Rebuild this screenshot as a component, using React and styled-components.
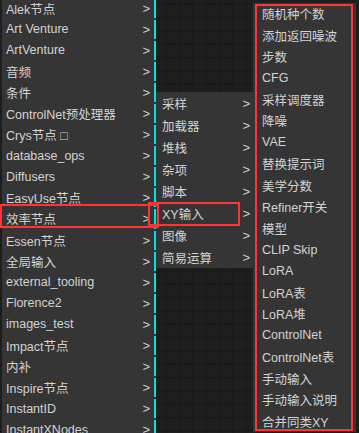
import React from 'react';
import styled, { createGlobalStyle } from 'styled-components';

const Global = createGlobalStyle`
  html, body { margin: 0; padding: 0; }
  body {
    width: 359px;
    height: 433px;
    overflow: hidden;
    background: #1d1d1d;
    font-family: "Liberation Sans", "Noto Sans CJK SC", sans-serif;
  }
`;

const Canvas = styled.div`
  position: relative;
  width: 359px;
  height: 433px;
  overflow: hidden;
  background-color: #1e1e1e;
  background-image:
    linear-gradient(#161616 1px, transparent 1px),
    linear-gradient(90deg, #161616 1px, transparent 1px);
  background-size: 13.33px 13.33px;
  background-position: 6px 4px;
`;

const Menu = styled.div`
  position: absolute;
  left: ${p => p.$x}px;
  top: ${p => p.$y}px;
  width: ${p => p.$w}px;
  display: flex;
  flex-direction: column;
  background: #353535;
  z-index: ${p => p.$z};
`;

const Entry = styled.div`
  height: ${p => p.$h}px;
  display: flex;
  align-items: stretch;
  background: #2c2626;
`;

const Label = styled.div`
  flex: 1;
  min-width: 0;
  display: flex;
  align-items: center;
  justify-content: space-between;
  padding: 0 ${p => p.$pr}px 0 ${p => p.$pl}px;
  background: #353535;
  color: #d3d3d3;
  font-size: 12.5px;
  white-space: nowrap;
`;

const Arrow = styled.span`
  font-family: "Liberation Sans", sans-serif;
  font-size: 13px;
  color: #cfcfcf;
`;

const Bar = styled.div`
  width: 2px;
  margin: 1px 0;
  background: #00e0e6;
`;

const Mark = styled.div`
  position: absolute;
  left: ${p => p.$x}px;
  top: ${p => p.$y}px;
  width: ${p => p.$w}px;
  height: ${p => p.$h}px;
  box-sizing: border-box;
  border: 2.5px solid #ff3434;
  z-index: 10;
  pointer-events: none;
`;

const leftItems = [
  'Alek节点', 'Art Venture', 'ArtVenture', '音频', '条件', 'ControlNet预处理器',
  'Crys节点 □', 'database_ops', 'Diffusers', 'EasyUse节点', '效率节点', 'Essen节点',
  '全局输入', 'external_tooling', 'Florence2', 'images_test', 'Impact节点', '内补',
  'Inspire节点', 'InstantID', 'InstantXNodes',
];

const midItems = ['采样', '加载器', '堆栈', '杂项', '脚本', 'XY输入', '图像', '简易运算'];

const rightItems = [
  '随机种个数', '添加返回噪波', '步数', 'CFG', '采样调度器', '降噪', 'VAE', '替换提示词',
  '美学分数', 'Refiner开关', '模型', 'CLIP Skip', 'LoRA', 'LoRA表', 'LoRA堆', 'ControlNet',
  'ControlNet表', '手动输入', '手动输入说明', '合并同类XY',
];

export default function App() {
  return (
    <>
      <Global />
      <Canvas>
        <Menu $x={2} $y={-2.5} $w={154} $z={1}>
          {leftItems.map(t => (
            <Entry key={t} $h={21.1}>
              <Label $pl={4} $pr={4}>
                <span>{t}</span>
                <Arrow>&gt;</Arrow>
              </Label>
              <Bar />
            </Entry>
          ))}
        </Menu>
        <Menu $x={156} $y={92} $w={100} $z={2}>
          {midItems.map(t => (
            <Entry key={t} $h={22}>
              <Label $pl={6} $pr={6}>
                <span>{t}</span>
                <Arrow>&gt;</Arrow>
              </Label>
            </Entry>
          ))}
        </Menu>
        <Menu $x={253} $y={3} $w={103} $z={3}>
          {rightItems.map(t => (
            <Entry key={t} $h={21.45}>
              <Label $pl={9} $pr={4}>
                <span>{t}</span>
              </Label>
            </Entry>
          ))}
        </Menu>
        <Mark $x={0} $y={204} $w={159} $h={24} />
        <Mark $x={148} $y={202} $w={92} $h={24} />
        <Mark $x={255} $y={4} $w={98} $h={427} />
      </Canvas>
    </>
  );
}
